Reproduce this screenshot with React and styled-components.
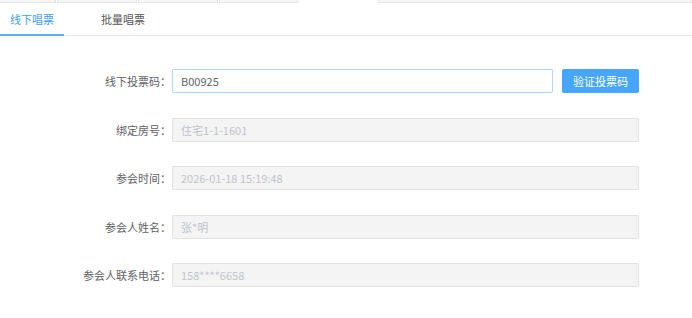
import React from "react";
import styled, { createGlobalStyle } from "styled-components";

const Global = createGlobalStyle`
  html, body { margin: 0; padding: 0; background: #fff; }
  body { font-family: "Noto Sans CJK SC", "Noto Sans", sans-serif; font-size: 11px; color: #606266; }
  * { box-sizing: border-box; }
`;

const Page = styled.div`
  width: 692px;
  height: 318px;
  overflow: hidden;
  background: #fff;
`;

const TopStrip = styled.div`
  display: flex;
  height: 3px;
  overflow: hidden;
`;

const TopTab = styled.div`
  flex: ${(p) => (p.$grow ? "1 1 auto" : "0 0 auto")};
  width: ${(p) => (p.$w ? `${p.$w}px` : "auto")};
  height: 3px;
  margin-right: ${(p) => (p.$mr ? `${p.$mr}px` : "0")};
  background: ${(p) => (p.$active ? "#fff" : "#f7f7f7")};
  border-left: ${(p) => (p.$active || p.$noLeft ? "none" : "1px solid #e6e6e6")};
  border-right: ${(p) => (p.$active || p.$noRight ? "none" : "1px solid #e6e6e6")};
  border-bottom: ${(p) => (p.$active ? "none" : "1px solid #e6e6e6")};
`;

const TabBar = styled.div`
  display: flex;
  height: 33px;
  border-bottom: 1px solid #e4e7ed;
`;

const Tab = styled.div`
  position: relative;
  width: ${(p) => p.$w}px;
  margin-right: ${(p) => p.$mr || 0}px;
  display: flex;
  align-items: center;
  justify-content: center;
  font-size: 11px;
  color: ${(p) => (p.$active ? "#409eff" : "#555")};
  &::after {
    content: "";
    display: ${(p) => (p.$active ? "block" : "none")};
    position: absolute;
    left: 0;
    right: 0;
    bottom: -1px;
    height: 2px;
    background: #5aaefc;
  }
`;

const Form = styled.div`
  display: flex;
  flex-direction: column;
  gap: 24.5px;
  padding-top: 33px;
`;

const Row = styled.div`
  display: flex;
  align-items: center;
  height: 24px;
`;

const Label = styled.div`
  width: 172px;
  padding-right: 1px;
  text-align: right;
  font-size: 11px;
  color: #606266;
  white-space: nowrap;
`;

const Field = styled.div`
  width: ${(p) => p.$w}px;
  height: 24px;
  padding: 0 8px;
  display: flex;
  align-items: center;
  border: 1px solid ${(p) => (p.$focus ? "#b3d8ff" : "#e2e2e2")};
  background: ${(p) => (p.$disabled ? "#f4f4f4" : "#fff")};
  color: ${(p) => (p.$disabled ? "#c0c4cc" : "#606266")};
  font-size: 11px;
  border-radius: 1px;
`;

const Button = styled.div`
  margin-left: 9px;
  width: 77px;
  height: 24px;
  background: #46a6fd;
  color: #fff;
  border-radius: 2px;
  display: flex;
  align-items: center;
  justify-content: center;
  font-size: 11px;
`;

const rows = [
  ["绑定房号：", "住宅1-1-1601"],
  ["参会时间：", "2026-01-18 15:19:48"],
  ["参会人姓名：", "张*明"],
  ["参会人联系电话：", "158****6658"],
];

export default function App() {
  return (
    <Page>
      <Global />
      <TopStrip>
        <TopTab $w={56} $mr={1} $noLeft />
        <TopTab $w={80} $mr={1} />
        <TopTab $w={80} $mr={1} />
        <TopTab $w={79} />
        <TopTab $w={80} $active />
        <TopTab $grow />
      </TopStrip>
      <TabBar>
        <Tab $w={64} $mr={27} $active>线下唱票</Tab>
        <Tab $w={64}>批量唱票</Tab>
      </TabBar>
      <Form>
        <Row>
          <Label>线下投票码：</Label>
          <Field $w={381} $focus>B00925</Field>
          <Button>验证投票码</Button>
        </Row>
        {rows.map(([l, v]) => (
          <Row key={l}>
            <Label>{l}</Label>
            <Field $w={467} $disabled>{v}</Field>
          </Row>
        ))}
      </Form>
    </Page>
  );
}
